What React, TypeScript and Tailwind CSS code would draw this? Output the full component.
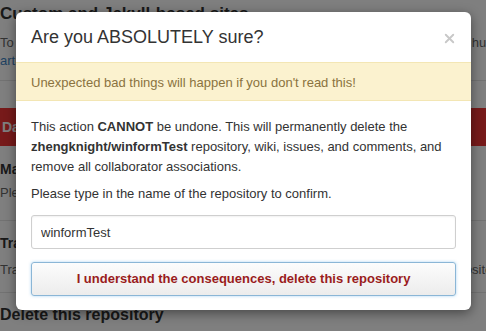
import { X } from 'lucide-react';

const font = { fontFamily: '"Liberation Sans", Arial, sans-serif' };

function PageBehind() {
    return (
        <div className="w-[486px] h-[331px] overflow-hidden bg-white text-[#333] whitespace-nowrap">
            <div className="pt-[3px] text-[17px] font-bold leading-[22px]">Custom and Jekyll-based sites</div>
            <div className="mt-[9px] text-[13px] leading-[18px] text-[#666]">
                To set up a custom domain or learn more about Jekyll, read the Pages help in our hub pages
            </div>
            <div className="text-[13px] leading-[18px] text-[#4183c4]">articles on GitHub Pages.</div>
            <div className="mt-[10px] border-t border-[#e5e5e5]" />
            <div className="mt-[27px] h-[38px] bg-[#ee3434] px-[2px] flex items-center text-[14px] font-bold text-white">Danger Zone</div>
            <div className="mt-[14px] text-[14px] font-bold leading-[18px]">Make this repository private</div>
            <div className="mt-[6px] text-[13px] leading-[18px] text-[#666]">Please upgrade your plan to make this repository private.</div>
            <div className="mt-[18px] border-t border-[#e5e5e5]" />
            <div className="mt-[13px] text-[14px] font-bold leading-[18px]">Transfer ownership</div>
            <div className="mt-[9px] text-[13px] leading-[18px] text-[#666]">
                Transfer this repo to another user or to an organization where you can create repositories nn r
            </div>
            <div className="mt-[13px] border-t border-[#e5e5e5]" />
            <div className="mt-[13px] text-[16px] font-bold leading-[18px]">Delete this repository</div>
        </div>
    );
}

export default function App() {
    return (
        <div className="relative w-[486px] h-[331px] overflow-hidden" style={font}>
            <PageBehind />
            <div className="absolute inset-0 bg-black/50" />

            <div className="absolute left-[16px] top-[12px] w-[455px] rounded-[6px] bg-white shadow-[0_3px_12px_rgba(0,0,0,0.45)] overflow-hidden">
                <div className="h-[50px] pl-[15px] pr-[14px] flex items-center justify-between">
                    <h3 className="text-[18px] text-[#333] leading-none">Are you ABSOLUTELY sure?</h3>
                    <X size={15} strokeWidth={3} className="text-[#c8c8c8] mt-[3px]" />
                </div>

                <div className="h-[39px] px-[15px] pt-[2px] flex items-center bg-[#fbf2cf] border-y border-[#f3e6b4] text-[13px] text-[#8a7340]">
                    Unexpected bad things will happen if you don't read this!
                </div>

                <div className="px-[15px] pt-[16px] pb-[14px] text-[13px] leading-[20px] text-[#333]">
                    <p>
                        This action <strong>CANNOT</strong> be undone. This will permanently delete the{' '}
                        <strong>zhengknight/winformTest</strong> repository, wiki, issues, and comments, and remove all
                        collaborator associations.
                    </p>
                    <p className="mt-[7px]">Please type in the name of the repository to confirm.</p>

                    <input
                        readOnly
                        value="winformTest"
                        className="mt-[11px] block w-full h-[34px] px-[9px] rounded-[3px] border border-[#cfcfcf] bg-white text-[13px] text-[#333] shadow-[inset_0_1px_2px_rgba(0,0,0,0.06)] outline-none"
                    />

                    <button className="mt-[13px] block w-full h-[34px] rounded-[3px] border border-[#8bb6d6] bg-gradient-to-b from-[#fcfcfc] to-[#ececec] text-[13px] font-bold text-[#9a1c1c] shadow-[0_0_3px_rgba(81,167,232,0.5)]">
                        I understand the consequences, delete this repository
                    </button>
                </div>
            </div>
        </div>
    );
}
